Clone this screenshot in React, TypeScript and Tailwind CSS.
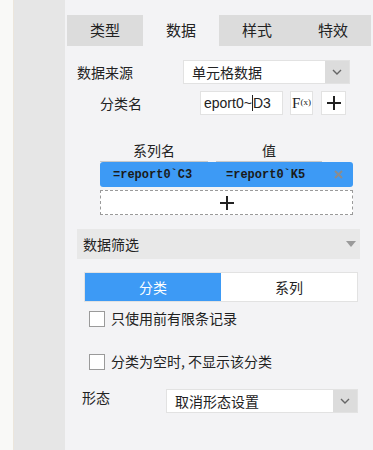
import React from "react"

const cjk = "font-['Microsoft_YaHei','Noto_Sans_CJK_SC',sans-serif]"

const Chevron: React.FC = () => (
  <svg width="10" height="6" viewBox="0 0 10 6" fill="none">
    <path d="M1 1l4 4 4-4" stroke="#666" strokeWidth="1.4" />
  </svg>
)

const Select: React.FC<{ label: string; className?: string }> = ({ label, className }) => (
  <div className={`flex h-6 border border-[#e2e2e2] bg-white ${className ?? ""}`}>
    <span className="flex-1 pl-2 text-[14px] leading-[22px] text-[#222]">{label}</span>
    <span className="flex w-6 items-center justify-center bg-[#dcdcdc]">
      <Chevron />
    </span>
  </div>
)

const Checkbox: React.FC<{ label: string }> = ({ label }) => (
  <div className="flex items-center gap-[6px] pl-[89px]">
    <span className="size-4 border border-[#9a9a9a] bg-white" />
    <span className="text-[14px] text-[#222]">{label}</span>
  </div>
)

const Plus: React.FC = () => (
  <svg width="14" height="14" viewBox="0 0 14 14">
    <path d="M7 0v14M0 7h14" stroke="#222" strokeWidth="2" />
  </svg>
)

const tabs = ["类型", "数据", "样式", "特效"]

const App: React.FC = () => {
  return (
    <div className={`flex h-[450px] w-[373px] overflow-hidden bg-[#f3f3f5] ${cjk}`}>
      <div className="w-[14px] border-r border-[#ece6dc] bg-[#f9f9f7]" />
      <div className="w-[51px] bg-[#e6e6e6]" />
      <div className="flex flex-1 flex-col">
        <div className="mt-[15px] ml-[2px] flex h-[31px]">
          {tabs.map((t, i) => (
            <div
              key={t}
              className={`flex w-[76px] items-center justify-center text-[15px] text-[#222] ${i === 1 ? "bg-[#f3f3f5]" : "bg-[#dcdcdc]"}`}
            >
              {t}
            </div>
          ))}
        </div>

        <div className="mt-[14px] flex items-center">
          <span className="ml-[12px] w-[106px] text-[14px] text-[#222]">数据来源</span>
          <Select label="单元格数据" className="w-[167px]" />
        </div>

        <div className="mt-[7px] flex items-center">
          <span className="ml-[35px] w-[100px] text-[14px] text-[#222]">分类名</span>
          <div className="h-6 w-[83px] overflow-hidden border border-[#e2e2e2] bg-white pl-[3px] font-['Liberation_Sans',sans-serif] text-[14px] leading-[22px] text-[#222]">
            eport0~<span className="border-l border-[#222]">D3</span>
          </div>
          <div className="ml-[7px] flex h-6 w-[23px] items-center justify-center border border-[#e2e2e2] bg-white font-['Liberation_Serif',serif] text-[15px] text-[#222]">
            F<span className="text-[9px]">(x)</span>
          </div>
          <div className="ml-[8px] flex h-6 w-[25px] items-center justify-center border border-[#e2e2e2] bg-white">
            <Plus />
          </div>
        </div>

        <div className="mt-[25px] ml-[35px] w-[253px]">
          <div className="flex h-[22px] text-[14px] text-[#222]">
            <div className="flex w-[108px] justify-center border-b border-[#c8c8c8]">系列名</div>
            <div className="ml-[8px] flex w-[106px] justify-center border-b border-[#c8c8c8]">值</div>
          </div>
          <div className="flex h-[25px] items-center rounded-[3px] bg-[#3d9af5] font-['Liberation_Mono',monospace] text-[12px] font-bold text-[#1a1a1a]">
            <span className="ml-[13px] w-[113px]">=report0`C3</span>
            <span className="w-[108px]">=report0`K5</span>
            <svg width="9" height="9" viewBox="0 0 9 9">
              <path d="M1 1l7 7M8 1l-7 7" stroke="#8c8c8c" strokeWidth="2" />
            </svg>
          </div>
          <div className="mt-[3px] flex h-[25px] items-center justify-center border border-dashed border-[#9a9a9a] bg-white">
            <Plus />
          </div>
        </div>

        <div className="mt-[14px] ml-[12px] flex h-[30px] w-[283px] items-center justify-between bg-[#e8e8e8] pl-[6px] pr-[4px]">
          <span className="text-[14px] text-[#222]">数据筛选</span>
          <svg width="10" height="6" viewBox="0 0 10 6">
            <path d="M0 0h10L5 6z" fill="#9a9a9a" />
          </svg>
        </div>

        <div className="mt-[13px] ml-[19px] flex h-[30px] w-[274px] border border-[#e2e2e2] text-[14px]">
          <div className="flex w-[136px] items-center justify-center bg-[#3d9af5] text-white">分类</div>
          <div className="flex flex-1 items-center justify-center bg-white text-[#222]">系列</div>
        </div>

        <div className="mt-[6px] -ml-[65px]">
          <Checkbox label="只使用前有限条记录" />
        </div>
        <div className="mt-[22px] -ml-[65px]">
          <Checkbox label="分类为空时, 不显示该分类" />
        </div>

        <div className="mt-[17px] flex items-start">
          <span className="ml-[17px] mt-[-2px] w-[84px] text-[14px] text-[#222]">形态</span>
          <Select label="取消形态设置" className="w-[192px]" />
        </div>
      </div>
    </div>
  )
}

export default App
